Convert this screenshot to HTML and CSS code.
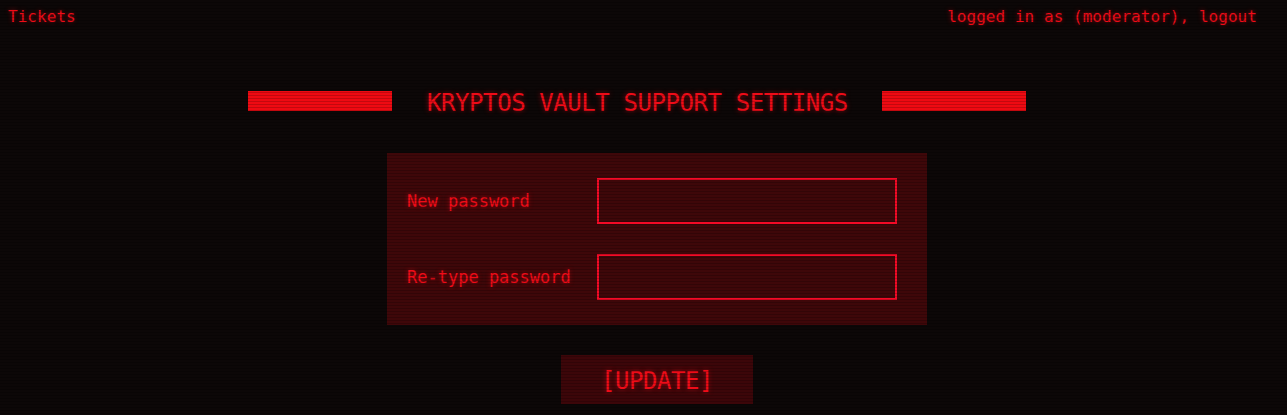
FILE: index.html
```html
<!DOCTYPE html>
<html lang="en">
<head>
<meta charset="utf-8">
<title>Kryptos Vault Support Settings</title>
<link rel="stylesheet" href="styles.css">
</head>
<body>
<header class="topbar">
  <a class="link" href="#">Tickets</a>
  <span class="user">logged in as (moderator), <a class="link" href="#">logout</a></span>
</header>
<main class="main">
  <div class="title-row">
    <span class="bar"></span>
    <h1 class="title">KRYPTOS VAULT SUPPORT SETTINGS</h1>
    <span class="bar"></span>
  </div>
  <form class="panel-wrap">
    <div class="panel">
      <div class="field">
        <label class="label" for="p1">New password</label>
        <input class="input" id="p1" type="password">
      </div>
      <div class="field">
        <label class="label" for="p2">Re-type password</label>
        <input class="input" id="p2" type="password">
      </div>
    </div>
    <button class="btn" type="button">[UPDATE]</button>
  </form>
</main>
<div class="scanlines"></div>
</body>
</html>
```
FILE: styles.css
```css
html, body {
  margin: 0;
  padding: 0;
}
body {
  background: #0c0707;
  color: #ef0c18;
  font-family: "DejaVu Sans Mono", "Liberation Mono", monospace;
  width: 1287px;
  height: 415px;
  overflow: hidden;
}
.link {
  color: inherit;
  text-decoration: none;
}
.topbar {
  display: flex;
  justify-content: space-between;
  padding: 1px 30px 0 8px;
  height: 31px;
  line-height: 32px;
  font-size: 16px;
  letter-spacing: 0.05px;
  text-shadow: 0 0 4px rgba(236, 11, 22, 0.55);
}
.main {
  display: flex;
  flex-direction: column;
}
.title-row {
  display: flex;
  align-items: flex-start;
  gap: 34px;
  margin-top: 59px;
  padding-left: 248px;
}
.bar {
  width: 144px;
  height: 20px;
  background: #ee0a12;
  flex: none;
}
.title {
  margin: 0 0 0 1px;
  padding-top: 2px;
  font-size: 24px;
  font-weight: normal;
  line-height: 20px;
  letter-spacing: -0.42px;
  text-shadow: 0 0 5px rgba(236, 11, 22, 0.55);
}
.panel-wrap {
  display: flex;
  flex-direction: column;
  align-items: center;
  gap: 30px;
  margin: 40px 0 0 387px;
  width: 540px;
}
.panel {
  box-sizing: border-box;
  width: 540px;
  background: #3e0709;
  padding: 25px 30px 25px 20px;
  display: flex;
  flex-direction: column;
  gap: 30px;
}
.field {
  display: flex;
  align-items: center;
}
.label {
  width: 190px;
  flex: none;
  font-size: 17px;
  text-shadow: 0 0 4px rgba(236, 11, 22, 0.55);
}
.input {
  box-sizing: border-box;
  width: 300px;
  height: 46px;
  margin: 0;
  border: 2px solid #f40a26;
  background: transparent;
  outline: none;
  color: #ef0c18;
  font-family: inherit;
}
.btn {
  box-sizing: border-box;
  width: 192px;
  height: 49px;
  border: none;
  background: #3c0609;
  color: #ef0c18;
  font-family: inherit;
  font-size: 24px;
  letter-spacing: -0.42px;
  padding: 2px 0 0;
  text-shadow: 0 0 5px rgba(236, 11, 22, 0.55);
}
.scanlines {
  position: fixed;
  inset: 0;
  pointer-events: none;
  background: repeating-linear-gradient(to bottom, rgba(0, 0, 0, 0) 0, rgba(0, 0, 0, 0) 2px, rgba(0, 0, 0, 0.18) 2px, rgba(0, 0, 0, 0.18) 3px);
}
```
